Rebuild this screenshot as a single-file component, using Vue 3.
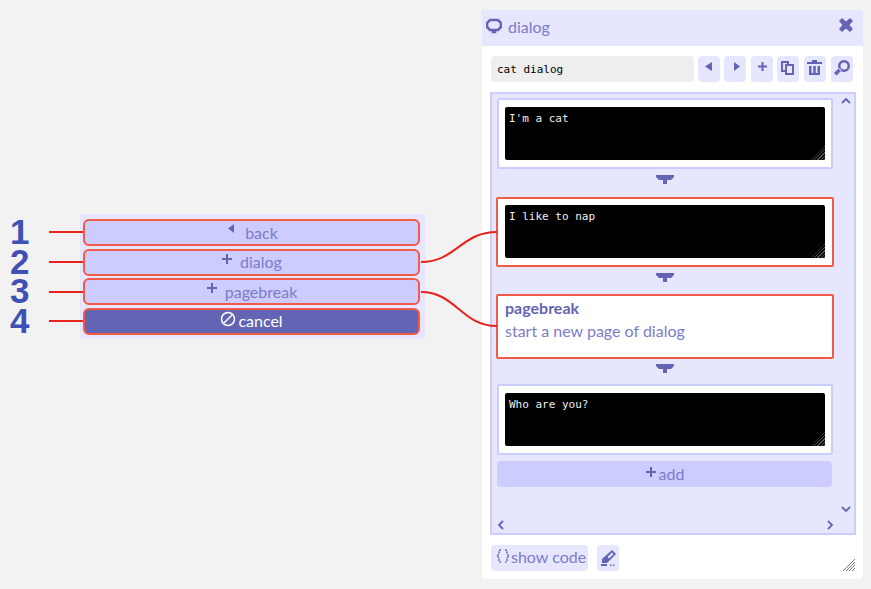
<script setup>
const menu = [
  { n: 1, label: 'back', icon: 'left', gap: 'g14' },
  { n: 2, label: 'dialog', icon: 'plus', gap: 'g12' },
  { n: 3, label: 'pagebreak', icon: 'plus', gap: 'g8' },
  { n: 4, label: 'cancel', icon: 'none', gap: 'g2', dark: true },
]
const tools = [
  'M14 6v9l-7-4.500z',
  'M10 6v9l6-4.500z',
  'M10.500 6h2v3.500H16v2h-3.500V15h-2v-3.500H7v-2h3.500z',
  'M4 5h8v3h5v11H8v-3H4zM6 7v7h2V8h2V7zM10 10v7h5v-7z',
  'M8 4h5v2h5v2H3V6h5zM5 10h2.500v9H5zM9.250 10h2.500v9h-2.500zM13.500 10H16v9h-2.500zM7.500 17h1.750v2H7.500zM11.750 17h1.750v2h-1.750z',
  'M13 4a6 6 0 1 1 0 12 6 6 0 0 1 0-12zm0 2.500a3.500 3.500 0 1 0 0 7 3.500 3.500 0 0 0 0-7zM3 17l5-5 2.500 2.500-5 5z',
]
</script>

<template>
  <div class="page">
    <div class="numbers">
      <span v-for="m in menu" :key="m.n">{{ m.n }}</span>
    </div>
    <div class="menu">
      <button v-for="m in menu" :key="m.label" class="menu-btn" :class="{ dark: m.dark }">
        <span class="menu-inner" :class="m.gap">
          <svg v-if="m.icon === 'left'" class="ico up" viewBox="0 0 10 12"><path d="M8 1v9L2 5.500z" /></svg>
          <svg v-else-if="m.icon === 'plus'" class="ico up" viewBox="0 0 12 12"><path d="M5 1h2v4h4v2H7v4H5V7H1V5h4z" /></svg>
          <svg v-else class="ico cancel" viewBox="0 0 16 16"><circle cx="8" cy="8" r="6.500" /><path d="M4 12l8-8" /></svg>
          {{ m.label }}
        </span>
      </button>
    </div>

    <section class="window">
      <header class="head">
        <div class="title">
          <svg class="bubble" viewBox="0 0 16 16"><path d="M4 2h8l3 3v4l-3 3H9v2H7v-2H4L1 9V5z" /></svg>
          <span>dialog</span>
        </div>
        <svg class="close" viewBox="0 0 14 14"><path d="M0 3l3-3 4 3.500L11 0l3 3-3.500 4L14 11l-3 3-4-3.500L3 14l-3-3 3.500-4z" /></svg>
      </header>

      <div class="toolbar">
        <div class="name">cat dialog</div>
        <div v-for="(d, i) in tools" :key="i" class="tool">
          <svg viewBox="0 0 22 22"><path :d="d" fill-rule="evenodd" /></svg>
        </div>
      </div>

      <div class="scroller">
        <div class="list">
          <div class="card"><div class="term">I'm a cat<i class="grip"></i></div></div>
          <svg class="join j1" viewBox="0 0 20 12"><path d="M1 1h18v2l-3 3h-4v4H8V6H4L1 3z" /></svg>
          <div class="card hot"><div class="term">I like to nap<i class="grip"></i></div></div>
          <svg class="join j2" viewBox="0 0 20 12"><path d="M1 1h18v2l-3 3h-4v4H8V6H4L1 3z" /></svg>
          <div class="card hot info">
            <strong>pagebreak</strong>
            <span>start a new page of dialog</span>
          </div>
          <svg class="join j3" viewBox="0 0 20 12"><path d="M1 1h18v2l-3 3h-4v4H8V6H4L1 3z" /></svg>
          <div class="card"><div class="term">Who are you?<i class="grip"></i></div></div>
          <button class="add">
            <svg class="ico add-ico" viewBox="0 0 12 12"><path d="M5 1h2v4h4v2H7v4H5V7H1V5h4z" /></svg>add
          </button>
        </div>
        <svg class="arrow a-up" viewBox="0 0 10 8"><path d="M1 6l4-4 4 4" /></svg>
        <svg class="arrow a-down" viewBox="0 0 10 8"><path d="M1 2l4 4 4-4" /></svg>
        <svg class="arrow a-left" viewBox="0 0 8 10"><path d="M6 1L2 5l4 4" /></svg>
        <svg class="arrow a-right" viewBox="0 0 8 10"><path d="M2 1l4 4-4 4" /></svg>
      </div>

      <footer class="foot">
        <button class="code">
          <svg class="braces" viewBox="0 0 16 16"><path d="M6 2H5L4 3v3L2 8l2 2v3l1 1h1M10 2h1l1 1v3l2 2-2 2v3l-1 1h-1" /></svg>show code
        </button>
        <div class="pen">
          <svg viewBox="0 0 22 22"><path fill-rule="evenodd" d="M15 3l4 4-9 9H5v-4zM15 5.500L10.500 10l1.500 1.500L16.500 7zM4 17h6v2H4zM13 17.500h1.500V19H13zM16 17.500h1.500V19H16z" /></svg>
        </div>
        <svg class="resize" viewBox="0 0 14 14"><path d="M1 13L13 1M4 13l9-9M7 13l6-6M10 13l3-3" /></svg>
      </footer>
    </section>

    <svg class="wires" viewBox="0 0 871 589">
      <path d="M49 232h34M49 262h34M49 292h34M49 321h34" />
      <path d="M421 262c35 0 40-30 76-30M421 292c35 0 40 34 76 34" />
    </svg>
  </div>
</template>

<style>
html, body { margin: 0; background: #f2f2f2; }
</style>

<style scoped>
.page {
  position: relative;
  width: 871px;
  height: 589px;
  overflow: hidden;
  background: #f2f2f2;
  font-family: Lato, "Noto Sans", sans-serif;
  color: #7c7cc8;
}
button { font: inherit; cursor: pointer; }
svg { display: block; }

.numbers {
  position: absolute;
  left: 10px;
  top: 217px;
  display: flex;
  flex-direction: column;
  font: 700 35px/29.700px "Liberation Sans", sans-serif;
  color: #3f51b5;
}
.menu {
  position: absolute;
  left: 80px;
  top: 214px;
  width: 345px;
  height: 125px;
  box-sizing: border-box;
  padding: 5px 5px 5px 3px;
  background: #e6e6ff;
  display: flex;
  flex-direction: column;
  gap: 2.700px;
}
.menu-btn {
  height: 27px;
  margin: 0;
  padding: 0 0 3px;
  box-sizing: border-box;
  border: 2px solid #f05a46;
  border-radius: 6px;
  background: #ccccff;
  color: #7c7cc8;
  font-size: 16px;
  line-height: 21px;
}
.menu-btn + .menu-btn { padding-bottom: 2px; }
.menu-btn.dark { background: #6464b4; color: #fff; }
.menu-inner { display: inline-flex; align-items: center; }
.g14 { gap: 8px; }
.g12 { gap: 7px; }
.g8 { gap: 7px; }
.g2 { gap: 2px; }
.ico { width: 12px; height: 12px; fill: #6464b4; }
.up { transform: translateY(-3px); }
.cancel { width: 16px; height: 16px; fill: none; stroke: #fff; stroke-width: 1.500; transform: translateY(-2px); }

.window {
  position: absolute;
  left: 482px;
  top: 10px;
  width: 381px;
  height: 569px;
  box-sizing: border-box;
  background: #fff;
  border-radius: 0 0 4px 4px;
  display: flex;
  flex-direction: column;
}
.head {
  height: 36px;
  flex: none;
  background: #e6e6ff;
  display: flex;
  align-items: center;
  justify-content: space-between;
  padding: 0 10px 0 4px;
}
.title { display: flex; align-items: center; gap: 6px; font-size: 16px; color: #7c7cc8; line-height: 32px; padding-bottom: 3px; }
.bubble { width: 16px; height: 16px; fill: none; stroke: #6464b4; stroke-width: 2.600; transform: translateY(-1px); }
.close { width: 14px; height: 14px; fill: #6464b4; transform: translateY(-3px); }

.toolbar {
  display: flex;
  align-items: stretch;
  gap: 4.600px;
  height: 26px;
  margin: 10px 9px 0;
  flex: none;
}
.name {
  width: 203px;
  flex: none;
  margin-right: -1px;
  background: #eeeeee;
  border-radius: 4px;
  box-sizing: border-box;
  padding-left: 6px;
  font: 11px/27px "DejaVu Sans Mono", monospace;
  color: #000;
}
.tool {
  width: 22px;
  flex: none;
  background: #e6e6ff;
  border-radius: 4px;
  display: flex;
  align-items: center;
  justify-content: center;
}
.tool svg { width: 22px; height: 22px; fill: #6464b4; transform: translateY(-2px); }

.scroller {
  position: relative;
  height: 443px;
  flex: none;
  margin: 10px 7px 0 8px;
  box-sizing: border-box;
  border: 2px solid #ccccff;
  background: #e6e6ff;
  overflow: hidden;
}
.list {
  box-sizing: border-box;
  width: 341px;
  padding: 4px 0 0 5px;
  display: flex;
  flex-direction: column;
  align-items: center;
}
.card {
  width: 336px;
  height: 71px;
  box-sizing: border-box;
  background: #fff;
  border: 2px solid #ccccff;
  border-radius: 2px;
  padding: 7px 6px 0 6px;
  flex: none;
}
.card.hot { border-color: #f05a46; height: 70px; width: 338px; padding: 6px 7px 0 7px; }
.card.info {
  height: 65px;
  padding: 2px 7px 0 7px;
  display: flex;
  flex-direction: column;
  gap: 3px;
  font-size: 16px;
  line-height: 20px;
  color: #7c7cc8;
}
.card.info strong { color: #6464b4; font-weight: 700; }
.term {
  position: relative;
  height: 53px;
  box-sizing: border-box;
  padding: 5px 4px;
  background: #000;
  border-radius: 2px;
  color: #eee;
  font: 11px/14px "DejaVu Sans Mono", monospace;
}
.grip {
  position: absolute;
  right: 0;
  bottom: 0;
  width: 14px;
  height: 14px;
  background: repeating-linear-gradient(135deg, transparent 0 1.500px, #555 1.500px 2.500px);
  clip-path: polygon(100% 0, 100% 100%, 0 100%);
}
.join { width: 20px; height: 12px; fill: #6464b4; flex: none; }
.j1 { margin: 5px 0 11px; }
.j2 { margin: 5px 0 10px; }
.j3 { margin: 4px 0 9px; }
.add {
  align-self: flex-start;
  width: 335px;
  height: 26px;
  margin: 6px 0 0;
  padding: 0 0 1px;
  border: 0;
  border-radius: 4px;
  background: #ccccff;
  color: #7c7cc8;
  font-size: 16px;
  display: flex;
  align-items: center;
  justify-content: center;
  gap: 2px;
}
.add-ico { transform: translateY(-2px); }
.arrow { position: absolute; fill: none; stroke: #6464b4; stroke-width: 1.800; }
.a-up { right: 3px; top: 3px; width: 10px; height: 8px; }
.a-down { right: 3px; bottom: 20px; width: 10px; height: 8px; }
.a-left { left: 5px; bottom: 3px; width: 8px; height: 10px; }
.a-right { right: 20px; bottom: 3px; width: 8px; height: 10px; }

.foot {
  position: relative;
  flex: 1;
  display: flex;
  align-items: flex-start;
  gap: 9px;
  padding: 10px 0 0 9px;
}
.code {
  width: 97px;
  height: 26px;
  padding: 0 0 4px 4px;
  border: 0;
  border-radius: 4px;
  background: #e6e6ff;
  color: #7c7cc8;
  font-size: 16px;
  display: flex;
  align-items: center;
}
.braces { width: 16px; height: 16px; fill: none; stroke: #6464b4; stroke-width: 1.500; stroke-dasharray: 2 1; flex: none; }
.pen { width: 22px; height: 26px; background: #e6e6ff; border-radius: 4px; display: flex; align-items: center; justify-content: center; }
.pen svg { width: 22px; height: 22px; fill: #6464b4; }
.resize {
  position: absolute;
  right: 7px;
  bottom: 7px;
  width: 14px;
  height: 14px;
  fill: none;
  stroke: #777;
  stroke-width: 1;
}
.wires {
  position: absolute;
  inset: 0;
  width: 871px;
  height: 589px;
  fill: none;
  stroke: #e8231e;
  stroke-width: 2;
  pointer-events: none;
}
</style>
